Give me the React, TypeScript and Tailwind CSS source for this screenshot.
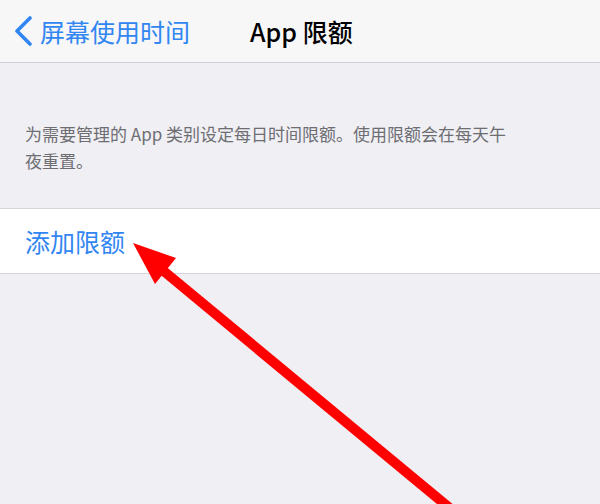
import React from 'react';

const font = { fontFamily: '"Noto Sans CJK SC", "Liberation Sans", sans-serif' };

export default function App() {
  return (
    <div className="relative w-[600px] h-[504px] overflow-hidden bg-[#efeff4]" style={font}>
      {/* Navigation bar */}
      <div className="relative flex items-center h-[63px] bg-[#f7f7f7] border-b border-[#d0d0d4]">
        <div className="flex items-center pl-[14px] text-[#3186f2]">
          <svg width="20" height="30" viewBox="0 0 20 30" className="mr-[6px]">
            <path d="M16 2 L3 15 L16 28" fill="none" stroke="#3186f2" strokeWidth="3.6" strokeLinecap="round" strokeLinejoin="round" />
          </svg>
          <span className="text-[25px] leading-none">屏幕使用时间</span>
        </div>
        <span className="ml-[60px] text-[25px] leading-none font-medium text-black">App 限额</span>
      </div>

      {/* Description */}
      <div className="px-[25px] pt-[57px] pb-[34px]">
        <p className="w-[486px] text-[17px] leading-[27px] text-[#6d6d72]">
          为需要管理的 App 类别设定每日时间限额。使用限额会在每天午夜重置。
        </p>
      </div>

      {/* Row */}
      <div className="flex items-center h-[66px] bg-white border-y border-[#d6d6da] px-[25px]">
        <span className="text-[25px] leading-none text-[#3186f2]">添加限额</span>
      </div>

      {/* Red arrow overlay */}
      <svg className="absolute left-0 top-0" width="600" height="504" viewBox="0 0 600 504">
        <line x1="160" y1="268" x2="452" y2="510" stroke="#ff0000" strokeWidth="10" />
        <polygon points="133,243 176,258 155,284" fill="#ff0000" />
      </svg>
    </div>
  );
}
